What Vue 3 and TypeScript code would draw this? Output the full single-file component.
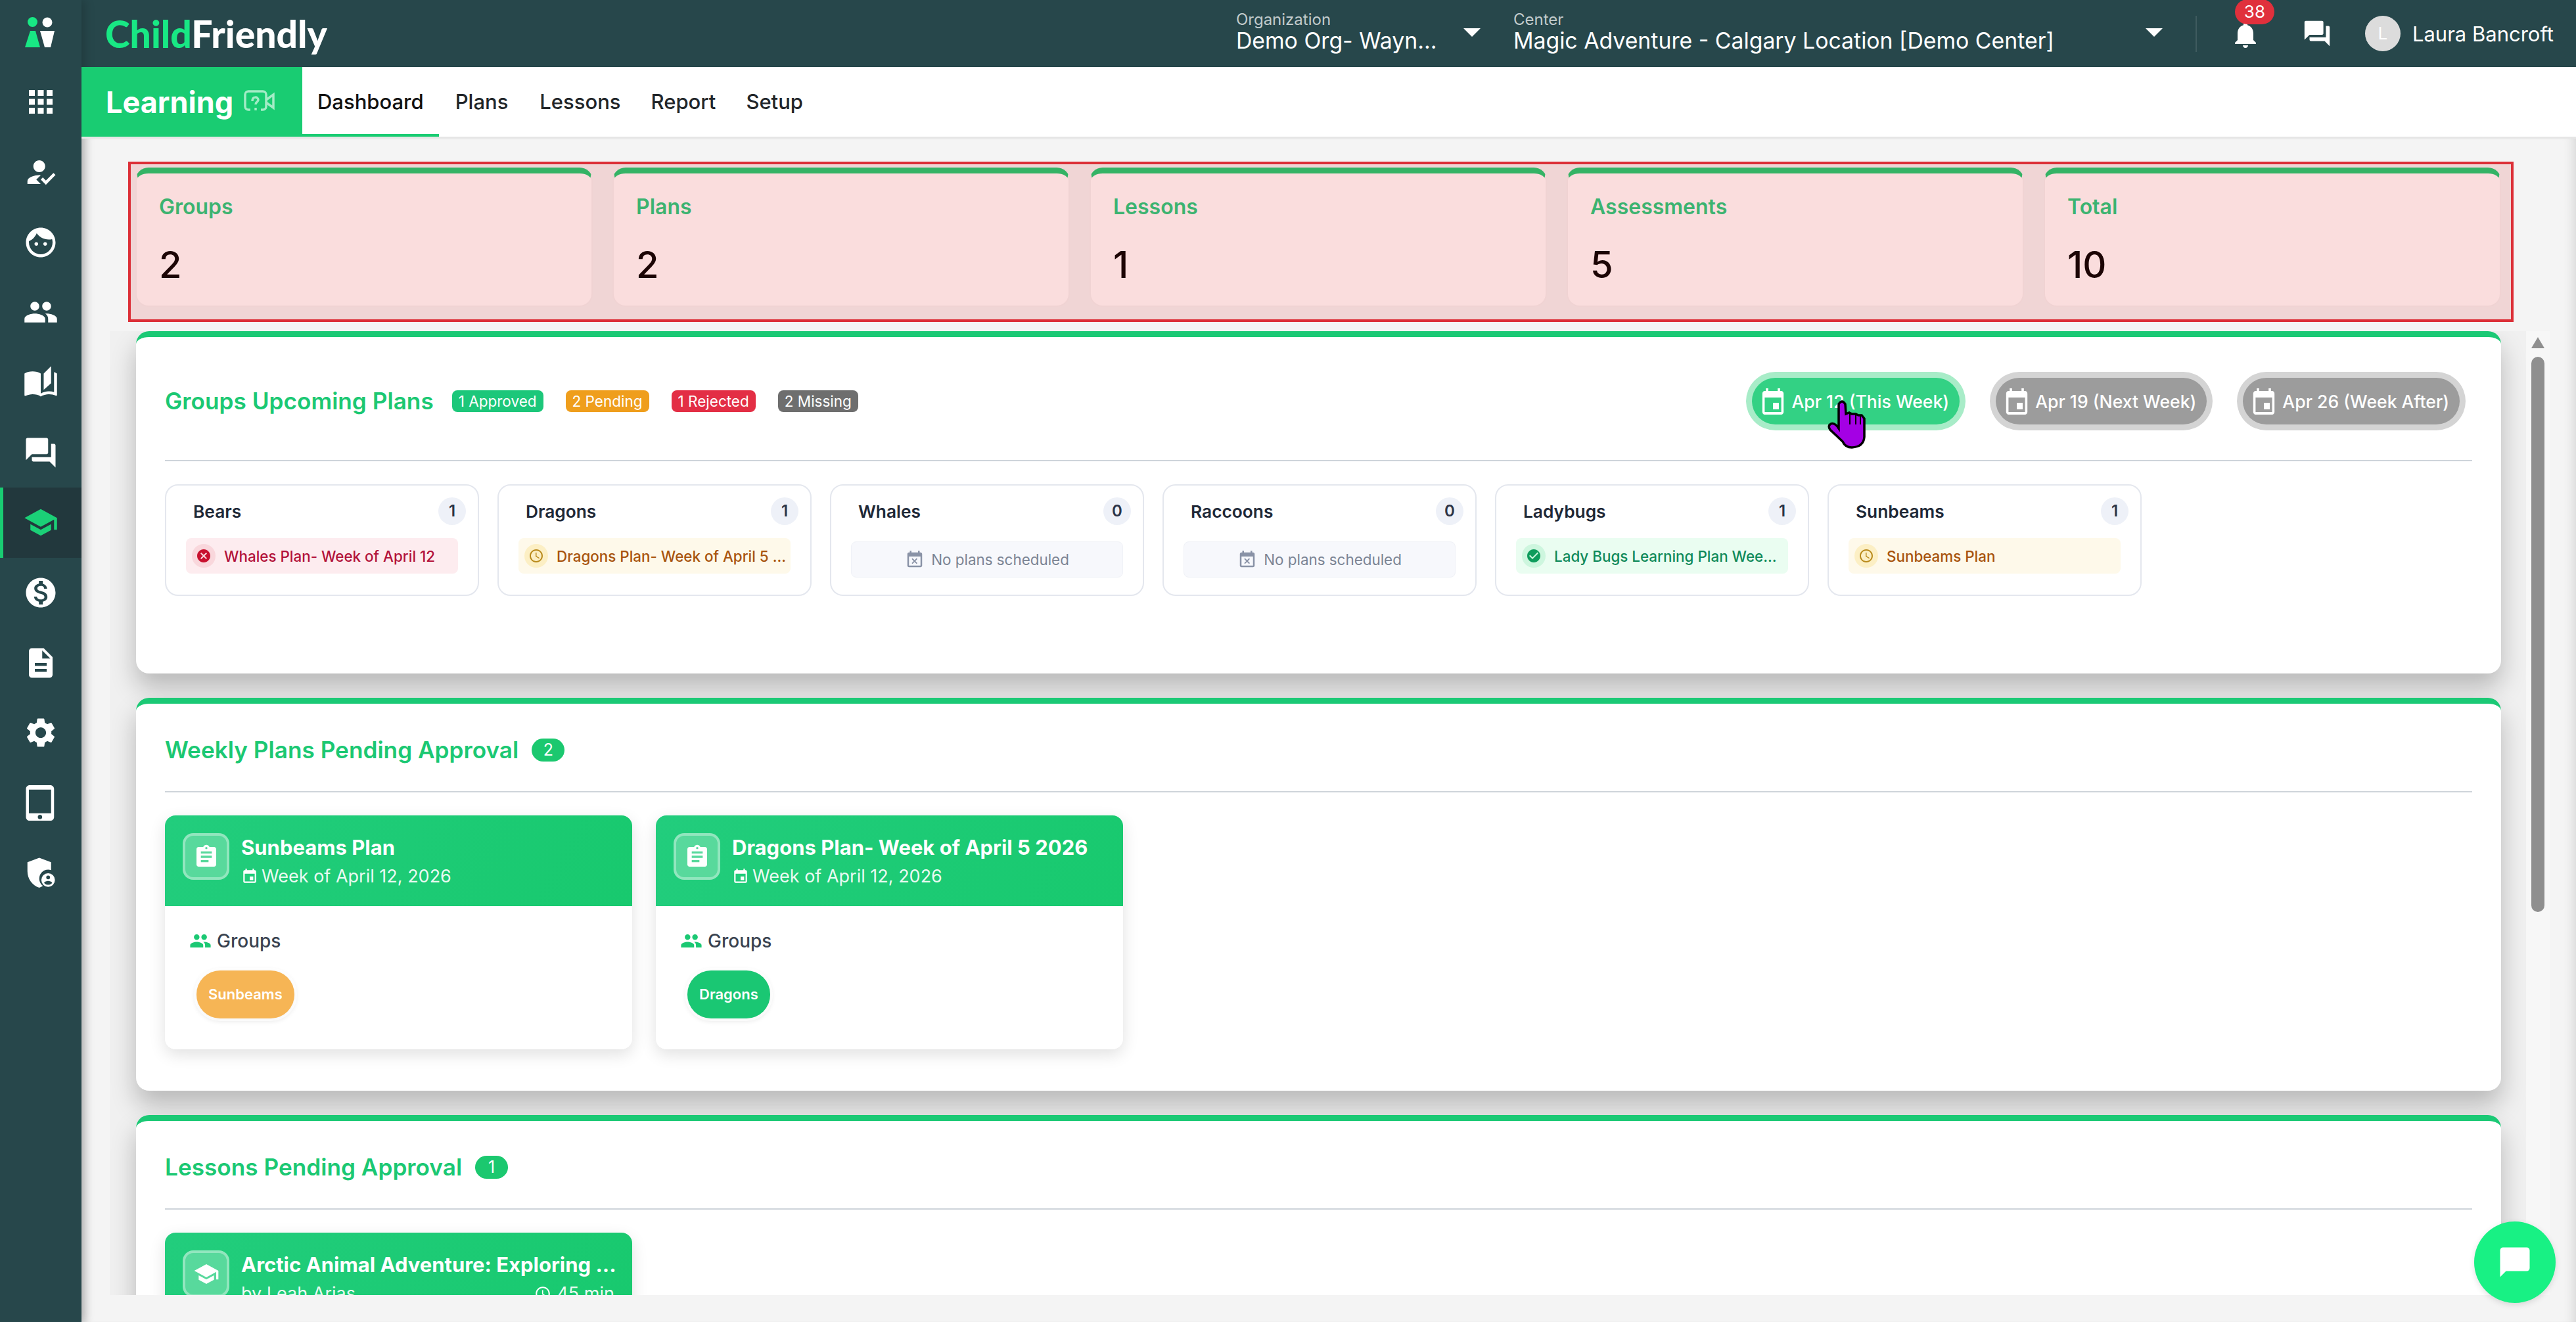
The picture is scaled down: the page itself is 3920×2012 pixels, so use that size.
<script setup lang="ts">
interface Stat { label: string; value: number }
interface Plan { text: string; kind: 'rejected' | 'pending' | 'approved' | 'empty' }
interface Group { name: string; count: number; plan: Plan }
interface Dated { label: string; active: boolean }

const I: Record<string, string> = {
  apps: 'M4 8h4V4H4v4zm6 12h4v-4h-4v4zm-6 0h4v-4H4v4zm0-6h4v-4H4v4zm6 0h4v-4h-4v4zm6-10v4h4V4h-4zm-6 4h4V4h-4v4zm6 6h4v-4h-4v4zm0 6h4v-4h-4v4z',
  reg: 'M9 17l3-2.94c-.39-.04-.68-.06-1-.06-2.67 0-8 1.34-8 4v2h9l-3-3zm2-5c2.21 0 4-1.79 4-4s-1.79-4-4-4-4 1.79-4 4 1.79 4 4 4zM15.47 20.5L12 17l1.4-1.41 2.07 2.08 5.13-5.17 1.4 1.41z',
  face: 'M9 11.75c-.69 0-1.25.56-1.25 1.25s.56 1.25 1.25 1.25 1.25-.56 1.25-1.25-.56-1.25-1.25-1.25zm6 0c-.69 0-1.25.56-1.25 1.25s.56 1.25 1.25 1.25 1.25-.56 1.25-1.25-.56-1.25-1.25-1.25zM12 2C6.48 2 2 6.48 2 12s4.48 10 10 10 10-4.48 10-10S17.52 2 12 2zm0 18c-4.41 0-8-3.59-8-8 0-.29.02-.58.05-.86 2.36-1.05 4.23-2.98 5.21-5.37C11.07 8.33 14.05 10 17.42 10c.78 0 1.53-.09 2.25-.26.21.71.33 1.47.33 2.26 0 4.41-3.59 8-8 8z',
  people: 'M16 11c1.66 0 2.99-1.34 2.99-3S17.66 5 16 5c-1.66 0-3 1.34-3 3s1.34 3 3 3zm-8 0c1.66 0 2.99-1.34 2.99-3S9.66 5 8 5C6.34 5 5 6.34 5 8s1.34 3 3 3zm0 2c-2.33 0-7 1.17-7 3.5V19h14v-2.5c0-2.33-4.67-3.5-7-3.5zm8 0c-.29 0-.62.02-.97.05 1.16.84 1.97 1.97 1.97 3.45V19h6v-2.5c0-2.33-4.67-3.5-7-3.5z',
  book: 'M19 1l-5 5v11l5-4.5V1zM1 6v14.65c0 .25.25.5.5.5.1 0 .15-.05.25-.05C3.1 20.45 5.05 20 6.5 20c1.95 0 4.05.4 5.5 1.5V6c-1.45-1.1-3.55-1.5-5.5-1.5S2.45 4.9 1 6zm22 13.5V6c-.6-.45-1.25-.75-2-1v13.5c-1.1-.35-2.3-.5-3.5-.5-1.7 0-4.15.65-5.5 1.5v2c1.35-.85 3.8-1.5 5.5-1.5 1.65 0 3.35.3 4.75 1.05.1.05.15.05.25.05.25 0 .5-.25.5-.5v-1.1z',
  forum: 'M21 6h-2v9H6v2c0 .55.45 1 1 1h11l4 4V7c0-.55-.45-1-1-1zm-4 6V3c0-.55-.45-1-1-1H3c-.55 0-1 .45-1 1v14l4-4h10c.55 0 1-.45 1-1z',
  school: 'M5 13.18v4L12 21l7-3.82v-4L12 17l-7-3.82zM12 3L1 9l11 6 9-4.91V17h2V9L12 3z',
  money: 'M12 2C6.48 2 2 6.48 2 12s4.48 10 10 10 10-4.48 10-10S17.52 2 12 2zm1.41 16.09V20h-2.67v-1.93c-1.71-.36-3.16-1.46-3.27-3.4h1.96c.1 1.05.82 1.87 2.65 1.87 1.96 0 2.4-.98 2.4-1.59 0-.83-.44-1.61-2.67-2.14-2.48-.6-4.18-1.62-4.18-3.67 0-1.72 1.39-2.84 3.11-3.21V4h2.67v1.95c1.86.45 2.79 1.86 2.87 3.39H14.3c-.05-1.11-.64-1.87-2.22-1.87-1.5 0-2.4.68-2.4 1.64 0 .84.65 1.39 2.67 1.91s4.18 1.39 4.18 3.91c-.01 1.83-1.38 2.83-3.12 3.16z',
  doc: 'M14 2H6c-1.1 0-1.99.9-1.99 2L4 20c0 1.1.89 2 1.99 2H18c1.1 0 2-.9 2-2V8l-6-6zm2 16H8v-2h8v2zm0-4H8v-2h8v2zm-3-5V3.5L18.5 9H13z',
  gear: 'M19.14 12.94c.04-.3.06-.61.06-.94 0-.32-.02-.64-.07-.94l2.03-1.58c.18-.14.23-.41.12-.61l-1.92-3.32c-.12-.22-.37-.29-.59-.22l-2.39.96c-.5-.38-1.03-.7-1.62-.94l-.36-2.54c-.04-.24-.24-.41-.48-.41h-3.84c-.24 0-.43.17-.47.41l-.36 2.54c-.59.24-1.13.57-1.62.94l-2.39-.96c-.22-.08-.47 0-.59.22L2.74 8.87c-.12.21-.08.47.12.61l2.03 1.58c-.05.3-.09.63-.09.94s.02.64.07.94l-2.03 1.58c-.18.14-.23.41-.12.61l1.92 3.32c.12.22.37.29.59.22l2.39-.96c.5.38 1.03.7 1.62.94l.36 2.54c.05.24.24.41.48.41h3.84c.24 0 .44-.17.47-.41l.36-2.54c.59-.24 1.13-.56 1.62-.94l2.39.96c.22.08.47 0 .59-.22l1.92-3.32c.12-.22.07-.47-.12-.61l-2.01-1.58zM12 15.6c-1.98 0-3.6-1.62-3.6-3.6s1.62-3.6 3.6-3.6 3.6 1.62 3.6 3.6-1.62 3.6-3.6 3.6z',
  tablet: 'M18.5 0h-14C3.12 0 2 1.12 2 2.5v19C2 22.88 3.12 24 4.5 24h14c1.38 0 2.5-1.12 2.5-2.5v-19C21 1.12 19.88 0 18.5 0zm-7 23c-.83 0-1.5-.67-1.5-1.5s.67-1.5 1.5-1.5 1.5.67 1.5 1.5-.67 1.5-1.5 1.5zm7.5-4H4V3h15v16z',
  shield: 'M11 1.5L3 4.6v6.1c0 5 3.2 9.6 8 11.1.9-.3 1.7-.7 2.5-1.2-1.5-1.1-2.5-2.9-2.5-4.9 0-3.4 2.7-6.1 6-6.1.7 0 1.3.1 2 .3V4.6L11 1.5zM17 12a4.6 4.6 0 1 0 0 9.200a4.600 4.600 0 0 0 0-9.200zm0 1.500a1.300 1.300 0 1 1 0 2.600 1.300 1.300 0 0 1 0-2.600zm0 6.300c-1.100 0-2.100-.5-2.700-1.300.1-.8 1.800-1.300 2.700-1.300s2.600.5 2.700 1.300c-.6.8-1.600 1.300-2.700 1.300z',
  event: 'M17 12h-5v5h5v-5zM16 1v2H8V1H6v2H5c-1.11 0-1.99.9-1.99 2L3 19c0 1.1.89 2 2 2h14c1.1 0 2-.9 2-2V5c0-1.1-.9-2-2-2h-1V1h-2zm3 18H5V8h14v11z',
  busy: 'M9.31 17l2.44-2.44L14.19 17l1.06-1.06-2.44-2.44 2.44-2.44L14.19 10l-2.44 2.44L9.31 10l-1.06 1.06 2.44 2.44-2.44 2.44L9.31 17zM19 3h-1V1h-2v2H8V1H6v2H5c-1.11 0-1.99.9-1.99 2L3 19c0 1.1.89 2 2 2h14c1.1 0 2-.9 2-2V5c0-1.1-.9-2-2-2zm0 16H5V8h14v11z',
  clock: 'M11.99 2C6.47 2 2 6.48 2 12s4.47 10 9.99 10C17.52 22 22 17.52 22 12S17.52 2 11.99 2zM12 20c-4.420 0-8-3.580-8-8s3.580-8 8-8 8 3.580 8 8-3.580 8-8 8zm.5-13H11v6l5.250 3.150.750-1.230-4.500-2.670z',
  cancel: 'M12 2C6.47 2 2 6.47 2 12s4.47 10 10 10 10-4.47 10-10S17.53 2 12 2zm5 13.59L15.59 17 12 13.41 8.41 17 7 15.59 10.59 12 7 8.41 8.41 7 12 10.59 15.59 7 17 8.41 13.41 12 17 15.59z',
  check: 'M12 2C6.48 2 2 6.48 2 12s4.48 10 10 10 10-4.48 10-10S17.52 2 12 2zm-2 15l-5-5 1.41-1.41L10 14.17l7.59-7.59L19 8l-9 9z',
  assign: 'M19 3h-4.180C14.400 1.840 13.300 1 12 1c-1.300 0-2.400.840-2.820 2H5c-1.100 0-2 .900-2 2v14c0 1.100.900 2 2 2h14c1.100 0 2-.900 2-2V5c0-1.100-.900-2-2-2zm-7 0c.550 0 1 .450 1 1s-.450 1-1 1-1-.450-1-1 .450-1 1-1zm2 14H7v-2h7v2zm3-4H7v-2h10v2zm0-4H7V7h10v2z',
  bell: 'M12 22c1.100 0 2-.900 2-2h-4c0 1.100.890 2 2 2zm6-6v-5c0-3.070-1.640-5.640-4.500-6.320V4c0-.830-.670-1.500-1.500-1.500s-1.500.670-1.500 1.500v.680C7.630 5.360 6 7.920 6 11v5l-2 2v1h16v-1l-2-2z',
  message: 'M20 2H4c-1.100 0-2 .900-2 2v18l4-4h14c1.100 0 2-.900 2-2V4c0-1.100-.900-2-2-2z'
}

const sideItems = ['apps', 'reg', 'face', 'people', 'book', 'forum', 'school', 'money', 'doc', 'gear', 'tablet', 'shield']
const tabs = ['Dashboard', 'Plans', 'Lessons', 'Report', 'Setup']
const stats: Stat[] = [
  { label: 'Groups', value: 2 },
  { label: 'Plans', value: 2 },
  { label: 'Lessons', value: 1 },
  { label: 'Assessments', value: 5 },
  { label: 'Total', value: 10 }
]
const chips = [
  { text: '1 Approved', cls: 'chip-green' },
  { text: '2 Pending', cls: 'chip-orange' },
  { text: '1 Rejected', cls: 'chip-red' },
  { text: '2 Missing', cls: 'chip-grey' }
]
const weeks: Dated[] = [
  { label: 'Apr 12 (This Week)', active: true },
  { label: 'Apr 19 (Next Week)', active: false },
  { label: 'Apr 26 (Week After)', active: false }
]
const groups: Group[] = [
  { name: 'Bears', count: 1, plan: { text: 'Whales Plan- Week of April 12', kind: 'rejected' } },
  { name: 'Dragons', count: 1, plan: { text: 'Dragons Plan- Week of April 5 ...', kind: 'pending' } },
  { name: 'Whales', count: 0, plan: { text: 'No plans scheduled', kind: 'empty' } },
  { name: 'Raccoons', count: 0, plan: { text: 'No plans scheduled', kind: 'empty' } },
  { name: 'Ladybugs', count: 1, plan: { text: 'Lady Bugs Learning Plan Wee...', kind: 'approved' } },
  { name: 'Sunbeams', count: 1, plan: { text: 'Sunbeams Plan', kind: 'pending' } }
]
const planIcon: Record<string, string> = { rejected: I.cancel, pending: I.clock, approved: I.check }
const weekly = [
  { title: 'Sunbeams Plan', tag: 'Sunbeams', tone: 'tag-orange' },
  { title: 'Dragons Plan- Week of April 5 2026', tag: 'Dragons', tone: 'tag-green' }
]
</script>

<template>
  <div class="app">
    <aside class="side">
      <div class="side-logo">
        <svg width="46" height="48" viewBox="0 0 46 48">
          <circle cx="11.500" cy="8.500" r="7.500" fill="#18e884" />
          <circle cx="34" cy="9" r="7.500" fill="#fff" />
          <path d="M8 22h8l7 25H0z" fill="#18e884" />
          <path d="M23 22h22l-6 25h-9z" fill="#fff" />
        </svg>
      </div>
      <div v-for="s in sideItems" :key="s" class="side-item" :class="{ active: s === 'school' }">
        <svg width="54" height="54" viewBox="0 0 24 24"><path :d="I[s]" /></svg>
      </div>
    </aside>

    <div class="main">
      <header class="top">
        <div class="brand"><span class="brand-a">Child</span><span class="brand-b">Friendly</span></div>
        <div class="top-right">
          <div class="picker org">
            <div class="pick-text">
              <span class="pick-label">Organization</span>
              <span class="pick-value">Demo Org- Wayn...</span>
            </div>
            <i class="caret"></i>
          </div>
          <div class="picker center">
            <div class="pick-text">
              <span class="pick-label">Center</span>
              <span class="pick-value">Magic Adventure - Calgary Location [Demo Center]</span>
            </div>
            <i class="caret"></i>
          </div>
          <div class="vline"></div>
          <div class="bell">
            <svg width="48" height="48" viewBox="0 0 24 24"><path :d="I.bell" fill="#fff" /></svg>
            <span class="badge">38</span>
          </div>
          <svg class="top-chat" width="46" height="46" viewBox="0 0 24 24"><path :d="I.forum" fill="#fff" /></svg>
          <div class="avatar">L</div>
          <span class="user">Laura Bancroft</span>
        </div>
      </header>

      <nav class="nav">
        <div class="module">
          <span>Learning</span>
          <svg width="48" height="36" viewBox="0 0 48 36" fill="none" stroke="#a3ecc6" stroke-width="3.500">
            <path d="M10 30H7a5 5 0 0 1-5-5V7a5 5 0 0 1 5-5h22a5 5 0 0 1 5 5v18a5 5 0 0 1-5 5h-3" />
            <path d="M34 15l11-8v20l-11-8" />
            <path d="M13 17c0-8 9-7 9-2 0 3-4 3-4 7M18 27v4" />
          </svg>
        </div>
        <a v-for="(t, i) in tabs" :key="t" class="tab" :class="{ on: i === 0 }">{{ t }}</a>
      </nav>

      <div class="content">
        <section class="stats">
          <div v-for="s in stats" :key="s.label" class="stat">
            <div class="stat-label">{{ s.label }}</div>
            <div class="stat-value">{{ s.value }}</div>
          </div>
        </section>

        <div class="scroll-wrap">
          <div class="scroller">
            <section class="panel panel-first">
              <div class="panel-head">
                <h2>Groups Upcoming Plans</h2>
                <span v-for="c in chips" :key="c.text" class="chip" :class="c.cls">{{ c.text }}</span>
                <div class="weeks">
                  <button v-for="w in weeks" :key="w.label" class="week" :class="{ on: w.active }">
                    <svg width="36" height="40" viewBox="2 1 20 20" preserveAspectRatio="none"><path :d="I.event" fill="#fff" /></svg>
                    <span>{{ w.label }}</span>
                    <svg v-if="w.active" class="hand" width="60" height="76" viewBox="-2 -2 60 76">
                      <path d="M16 5Q21-3 26 5L27 20 32 18 36 20 42 20 46 22 51 22 55 27 55 55Q54 70 36 71 26 71 22 62L3 44Q-1 38 4 35 9 33 14 39L16 42Z" fill="#a400e4" stroke="#000" stroke-width="3.500" />
                      <path d="M33 20V36M42 21V36M49 23V36" stroke="#000" stroke-width="2" fill="none" />
                    </svg>
                  </button>
                </div>
              </div>
              <div class="group-row">
                <article v-for="g in groups" :key="g.name" class="group">
                  <div class="group-head">
                    <span class="group-name">{{ g.name }}</span>
                    <span class="group-count">{{ g.count }}</span>
                  </div>
                  <div v-if="g.plan.kind === 'empty'" class="pl empty">
                    <svg width="30" height="30" viewBox="0 0 24 24"><path :d="I.busy" fill="#8992a6" /></svg>
                    <span>{{ g.plan.text }}</span>
                  </div>
                  <div v-else class="pl" :class="g.plan.kind">
                    <span class="pl-icon">
                      <svg width="24" height="24" viewBox="0 0 24 24"><path :d="planIcon[g.plan.kind]" /></svg>
                    </span>
                    <span class="pl-text">{{ g.plan.text }}</span>
                  </div>
                </article>
              </div>
            </section>

            <section class="panel">
              <div class="panel-head">
                <h2>Weekly Plans Pending Approval</h2>
                <span class="num">2</span>
              </div>
              <div class="card-row">
                <article v-for="p in weekly" :key="p.title" class="card">
                  <div class="card-head">
                    <div class="card-icon">
                      <svg width="40" height="40" viewBox="0 0 24 24"><path :d="I.assign" fill="#fff" /></svg>
                    </div>
                    <div class="card-meta">
                      <div class="card-title">{{ p.title }}</div>
                      <div class="card-sub">
                        <svg width="26" height="26" viewBox="0 0 24 24"><path :d="I.event" /></svg>
                        <span>Week of April 12, 2026</span>
                      </div>
                    </div>
                  </div>
                  <div class="card-body">
                    <div class="card-groups">
                      <svg width="34" height="34" viewBox="0 0 24 24"><path :d="I.people" fill="#1bc873" /></svg>
                      <span>Groups</span>
                    </div>
                    <span class="tag" :class="p.tone">{{ p.tag }}</span>
                  </div>
                </article>
              </div>
            </section>

            <section class="panel">
              <div class="panel-head">
                <h2>Lessons Pending Approval</h2>
                <span class="num">1</span>
              </div>
              <div class="card-row">
                <article class="card">
                  <div class="card-head">
                    <div class="card-icon">
                      <svg width="40" height="40" viewBox="0 0 24 24"><path :d="I.school" fill="#fff" /></svg>
                    </div>
                    <div class="card-meta">
                      <div class="card-title">Arctic Animal Adventure: Exploring ...</div>
                      <div class="card-sub between">
                        <span>by Leah Arias</span>
                        <span class="dur">
                          <svg width="26" height="26" viewBox="0 0 24 24"><path :d="I.clock" /></svg>
                          <span>45 min</span>
                        </span>
                      </div>
                    </div>
                  </div>
                </article>
              </div>
            </section>
          </div>
          <div class="scrollbar">
            <i class="sb-arrow"></i>
            <i class="sb-thumb"></i>
          </div>
        </div>
      </div>

      <button class="fab" aria-label="Chat">
        <svg width="54" height="54" viewBox="0 0 24 24"><path :d="I.message" fill="#fff" /></svg>
      </button>
    </div>
  </div>
</template>

<style>
html, body { margin: 0; overflow: hidden; background: #f5f5f5; }
</style>

<style scoped>
.app {
  display: flex;
  height: 100vh;
  overflow: hidden;
  font-family: Inter, "Noto Sans", sans-serif;
  color: #1f2937;
  background: #f4f4f4;
}
.side {
  width: 124px;
  flex: none;
  background: #27474b;
  position: relative;
  z-index: 3;
  box-shadow: 5px 0 14px rgba(0, 0, 0, .18);
}
.side-logo { height: 102px; display: flex; align-items: center; justify-content: center; padding: 0 2px 4px 0; box-sizing: border-box; }
.side-item { height: 106.67px; display: flex; align-items: center; justify-content: center; fill: #fff; box-sizing: border-box; }
.side-item.active { background: #22383d; border-left: 5px solid #19cc72; padding-right: 5px; fill: #1bd077; }

.main { flex: 1; min-width: 0; display: flex; flex-direction: column; position: relative; }

.top { height: 102px; flex: none; background: #27474b; display: flex; align-items: center; color: #fff; }
.brand { margin-left: 36px; font-family: Lato, sans-serif; font-weight: 900; font-size: 57px; line-height: 1; }
.brand-a { color: #18e884; }
.brand-b { color: #fff; }
.top-right { margin-left: auto; display: flex; align-items: center; height: 100%; padding-right: 34px; }
.picker { display: flex; position: relative; height: 100%; box-sizing: border-box; padding-top: 17px; }
.org { width: 372px; }
.center { width: 988px; margin-left: 50px; }
.pick-text { display: flex; flex-direction: column; }
.pick-label { font-size: 24px; line-height: 26px; color: rgba(255, 255, 255, .72); }
.pick-value { font-size: 33.800px; line-height: 38px; color: #fff; white-space: nowrap; }
.caret {
  position: absolute;
  right: 0;
  top: 43px;
  border-left: 13px solid transparent;
  border-right: 13px solid transparent;
  border-top: 13px solid #fff;
}
.vline { width: 2px; height: 55px; background: #3f5b5f; margin-left: 50px; }
.bell { position: relative; width: 48px; height: 48px; margin-left: 50px; margin-top: 4px; }
.bell svg { display: block; }
.badge {
  position: absolute;
  left: 8px;
  top: -30px;
  width: 60px;
  height: 38px;
  border-radius: 19px;
  background: #e0303c;
  color: #fff;
  font-size: 26px;
  line-height: 38px;
  text-align: center;
}
.top-chat { margin-left: 62px; }
.avatar {
  width: 54px;
  height: 54px;
  border-radius: 50%;
  background: #dcdcdc;
  color: #fff;
  font-size: 26px;
  line-height: 54px;
  text-align: center;
  margin-left: 50px;
}
.user { font-size: 31px; margin-left: 18px; white-space: nowrap; }

.nav { height: 106px; flex: none; background: #fff; display: flex; border-bottom: 3px solid #e6e6e6; box-sizing: content-box; align-items: stretch; position: relative; z-index: 4; }
.module {
  width: 336px;
  box-sizing: border-box;
  background: #19cc72;
  color: #fff;
  display: flex;
  align-items: center;
  gap: 16px;
  padding-left: 37px;
  font-size: 45px;
  font-weight: 700;
}
.tab { display: flex; align-items: center; padding: 3px 23px 0; font-size: 31px; font-weight: 500; color: #212529; box-sizing: border-box; border-bottom: 4px solid transparent; }
.tab:nth-of-type(2), .tab:nth-of-type(3) { margin-left: 2px; }
.tab.on { border-bottom-color: #19cc72; color: #111; }

.content { flex: 1; min-height: 0; display: flex; flex-direction: column; padding-bottom: 41px; box-shadow: inset 14px 0 14px -10px rgba(0, 0, 0, .14), inset -16px 0 16px -12px rgba(0, 0, 0, .12); }
.stats {
  margin: 35px 95px 14px 71px;
  height: 244px;
  flex: none;
  box-sizing: border-box;
  border: 4px solid #dc2f37;
  background: #f0d5d5;
  display: grid;
  grid-template-columns: repeat(5, 1fr);
  gap: 30px;
  padding: 5px 15px 19px 7px;
}
.stat {
  background: #fadddd;
  border: 2px solid #f0d3d3;
  border-top: 9px solid #34b365;
  border-radius: 20px;
  padding: 31px 34px 0;
  box-sizing: border-box;
}
.stat-label { font-size: 32px; line-height: 40px; font-weight: 600; color: #3cb370; }
.stat-value { font-size: 56px; line-height: 68px; margin-top: 34px; font-weight: 500; color: #1c0505; }

.scroll-wrap { flex: 1; min-height: 0; display: flex; margin-left: 43px; margin-right: 40px; }
.scroller { flex: 1; min-width: 0; overflow: hidden; padding: 0 38px 0 40px; background: #f0f0f0; }
.scrollbar { width: 36px; flex: none; background: #f7f7f7; display: flex; flex-direction: column; align-items: center; padding-top: 9px; box-sizing: border-box; }
.sb-arrow { width: 0; height: 0; border-left: 10px solid transparent; border-right: 10px solid transparent; border-bottom: 17px solid #8f8f8f; }
.sb-thumb { width: 20px; height: 845px; margin-top: 13px; background: #8f8f8f; border-radius: 10px; }

.panel {
  background: #fff;
  border-top: 9px solid #1bc975;
  border-radius: 20px;
  padding: 53px 44px 63px;
  margin-bottom: 37px;
  box-shadow: 0 22px 38px rgba(0, 0, 0, .23);
}
.panel-first { padding-bottom: 118px; }
.panel-head {
  display: flex;
  align-items: center;
  padding-bottom: 45px;
  border-bottom: 2px solid #ced4da;
  margin-bottom: 35px;
  min-height: 35px;
}
h2 { margin: 0 20px 0 0; font-size: 35.200px; line-height: 35px; font-weight: 600; color: #1bc873; white-space: nowrap; }
.panel-first h2 { margin-right: 28px; }
.chip { height: 33px; line-height: 33px; padding: 0 10px; border-radius: 8px; color: #fff; font-size: 22.500px; margin-right: 34px; white-space: nowrap; }
.chip-green { background: #1cc77a; }
.chip-orange { background: #ef9e1c; }
.chip-red { background: #e32e45; }
.chip-grey { background: #6e6e6e; }
.weeks { margin-left: auto; display: flex; gap: 37px; margin-right: 10px; }
.week {
  position: relative;
  height: 71px;
  margin: 9px;
  padding: 0 16px 0 14px;
  border: 0;
  border-radius: 36px;
  background: #9c9c9c;
  box-shadow: 0 0 0 9px #d4d4d4;
  color: #fff;
  display: flex;
  align-items: center;
  gap: 10px;
  font: 500 26.600px Inter, sans-serif;
  white-space: nowrap;
}
.week.on { background: #33d184; box-shadow: 0 0 0 9px #a8ecc8; }
.hand { position: absolute; left: 114px; top: 33px; }

.group-row { display: flex; gap: 28px; }
.group { width: 478px; height: 170px; box-sizing: border-box; border: 2px solid #e4e7ee; border-radius: 20px; padding: 18px 18px 0; }
.group-head { display: flex; align-items: center; justify-content: space-between; height: 42px; padding-left: 23px; }
.group-name { font-size: 26.300px; font-weight: 600; color: #1f2937; }
.group-count { width: 42px; height: 42px; border-radius: 50%; background: #eef1f8; font-size: 24px; font-weight: 600; line-height: 42px; text-align: center; color: #2c3446; }
.pl { margin: 20px 12px 0; height: 54px; border-radius: 8px; display: flex; align-items: center; padding-left: 9px; gap: 13px; font-size: 22.400px; font-weight: 500; white-space: nowrap; }
.pl-icon { width: 36px; height: 36px; border-radius: 50%; display: flex; align-items: center; justify-content: center; flex: none; }
.rejected { background: #fdecef; color: #b3123a; fill: #c8102e; }
.rejected .pl-icon { background: #f9d7dc; }
.pending { background: #fef9ea; color: #a8540e; fill: #b98a1c; }
.pending .pl-icon { background: #fcefc4; }
.approved { background: #eafdf1; color: #0f8a5a; fill: #0e9c5c; }
.approved .pl-icon { background: #cdf6de; }
.empty { margin-top: 25px; height: 55px; background: #f7f8fc; border: 1px solid #f0f2f7; color: #7b8494; justify-content: center; padding: 0; gap: 10px; font-weight: 400; box-sizing: border-box; }

.num { min-width: 50px; height: 35px; line-height: 35px; border-radius: 18px; background: #1bc86f; color: #fff; font-size: 25px; text-align: center; }
.card-row { display: flex; gap: 36px; }
.card { width: 711px; border-radius: 16px; background: #fff; overflow: hidden; box-shadow: 0 8px 24px rgba(0, 0, 0, .12); }
.card-head { height: 138px; box-sizing: border-box; padding: 27px 27px 0; display: flex; gap: 18px; background: linear-gradient(120deg, #22cd7d, #18c96e); color: #fff; }
.card-icon { width: 71px; height: 71px; flex: none; box-sizing: border-box; border: 4px solid rgba(255, 255, 255, .35); background: rgba(255, 255, 255, .25); border-radius: 16px; display: flex; align-items: center; justify-content: center; }
.card-meta { flex: 1; min-width: 0; }
.card-title { font-size: 31px; line-height: 44px; font-weight: 700; white-space: nowrap; }
.card-sub { display: flex; align-items: center; gap: 5px; font-size: 27px; line-height: 44px; fill: #fff; color: rgba(255, 255, 255, .92); white-space: nowrap; }
.between { justify-content: space-between; }
.dur { display: inline-flex; align-items: center; gap: 8px; }
.card-body { height: 218px; box-sizing: border-box; padding: 38px 37px 0; }
.card-groups { display: flex; align-items: center; gap: 8px; height: 30px; font-size: 28px; font-weight: 500; color: #3a4350; }
.tag { display: flex; width: fit-content; margin: 30px 0 0 11px; height: 73px; line-height: 73px; padding: 0 18px; border-radius: 36px; color: #fff; font-size: 22px; font-weight: 600; box-shadow: 0 0 0 4px rgba(255, 255, 255, .7), 0 2px 10px rgba(0, 0, 0, .16); }
.tag-orange { background: #f6b555; }
.tag-green { background: #1ac773; }

.fab {
  position: absolute;
  right: 31px;
  bottom: 29px;
  width: 124px;
  height: 124px;
  border-radius: 50%;
  border: 0;
  background: #18f184;
  display: flex;
  align-items: center;
  justify-content: center;
  box-shadow: 0 3px 10px rgba(0, 0, 0, .12);
  z-index: 5;
}
</style>
